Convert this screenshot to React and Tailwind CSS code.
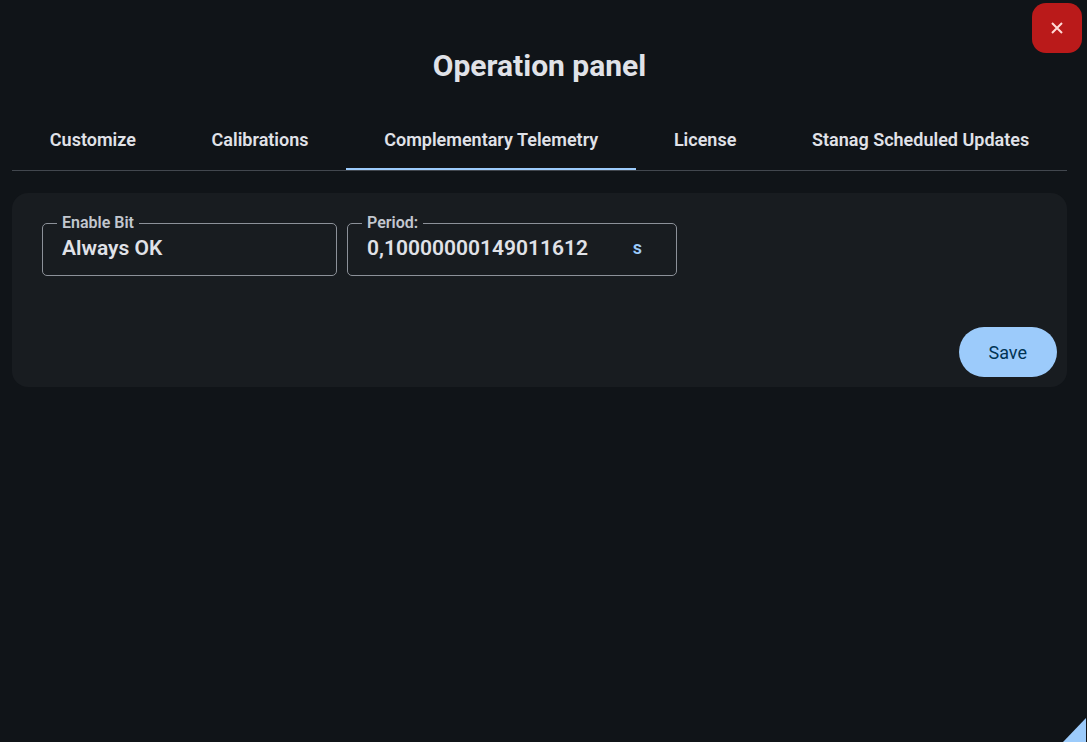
import { useState } from "react";

const TABS = [
  "Customize",
  "Calibrations",
  "Complementary Telemetry",
  "License",
  "Stanag Scheduled Updates",
];

function Field({ id, label, className, children }) {
  return (
    <fieldset
      className={`min-w-0 rounded-[5px] border border-[#8c9199] px-[14px] ${className}`}
    >
      <legend className="px-[5px] text-base leading-5 font-semibold text-[#c2c7cf]">
        <label htmlFor={id}>{label}</label>
      </legend>
      <div className="flex h-[42px] items-start px-[5px]">{children}</div>
    </fieldset>
  );
}

export default function App() {
  const [activeTab, setActiveTab] = useState("Complementary Telemetry");
  const [enableBit, setEnableBit] = useState("Always OK");
  const [period, setPeriod] = useState("0,10000000149011612");

  return (
    <div className="relative min-h-screen overflow-hidden bg-[#101418] pr-5 pl-3 font-['Roboto',sans-serif] text-[#e0e2e8]">
      <button
        type="button"
        aria-label="Close"
        className="absolute top-[3px] right-[5px] flex size-[50px] items-center justify-center rounded-[14px] bg-[#ba1a1a] text-[#ffdad6]"
      >
        <svg
          viewBox="0 0 12 12"
          className="size-3"
          fill="none"
          stroke="currentColor"
          strokeWidth="2"
        >
          <path d="M1 1l10 10M11 1L1 11" />
        </svg>
      </button>

      <h1 className="pt-[46px] text-center text-[30px] leading-10 font-bold">
        Operation panel
      </h1>

      <div role="tablist" className="mt-6 flex border-b border-[#42474e]">
        {TABS.map((tab) => (
          <button
            key={tab}
            type="button"
            role="tab"
            aria-selected={tab === activeTab}
            onClick={() => setActiveTab(tab)}
            className={`h-[60px] flex-auto border-b-2 pt-[2px] text-lg font-semibold whitespace-nowrap ${
              tab === activeTab ? "border-[#9ccbfb]" : "border-transparent"
            }`}
          >
            {tab}
          </button>
        ))}
      </div>

      <div className="mt-[22px] rounded-2xl bg-[#181c20] p-[10px]">
        <div className="flex flex-wrap gap-[10px] px-5 pt-[10px]">
          <Field id="enable-bit" label="Enable Bit" className="w-[295px]">
            <select
              id="enable-bit"
              value={enableBit}
              onChange={(e) => setEnableBit(e.target.value)}
              className="w-full appearance-none bg-transparent text-[21px] leading-[30px] font-semibold outline-none"
            >
              <option>Always OK</option>
            </select>
          </Field>

          <Field id="period" label="Period:" className="w-[330px]">
            <input
              id="period"
              type="text"
              value={period}
              onChange={(e) => setPeriod(e.target.value)}
              className="w-full min-w-0 bg-transparent text-[21px] leading-[30px] font-semibold outline-none"
            />
            <span className="px-[15px] text-lg leading-[30px] font-semibold text-[#9ccbfb]">
              s
            </span>
          </Field>
        </div>

        <div className="mt-[51px] flex justify-end">
          <button
            type="button"
            className="h-[50px] rounded-full bg-[#9ccbfb] px-[30px] pt-px text-lg text-[#003354]"
          >
            Save
          </button>
        </div>
      </div>

      {/* resize handle */}
      <svg
        viewBox="0 0 24 24"
        className="absolute right-px bottom-0 size-6 cursor-nwse-resize"
        fill="#9ccbfb"
      >
        <path d="M24 0v24H1z" />
      </svg>
    </div>
  );
}
